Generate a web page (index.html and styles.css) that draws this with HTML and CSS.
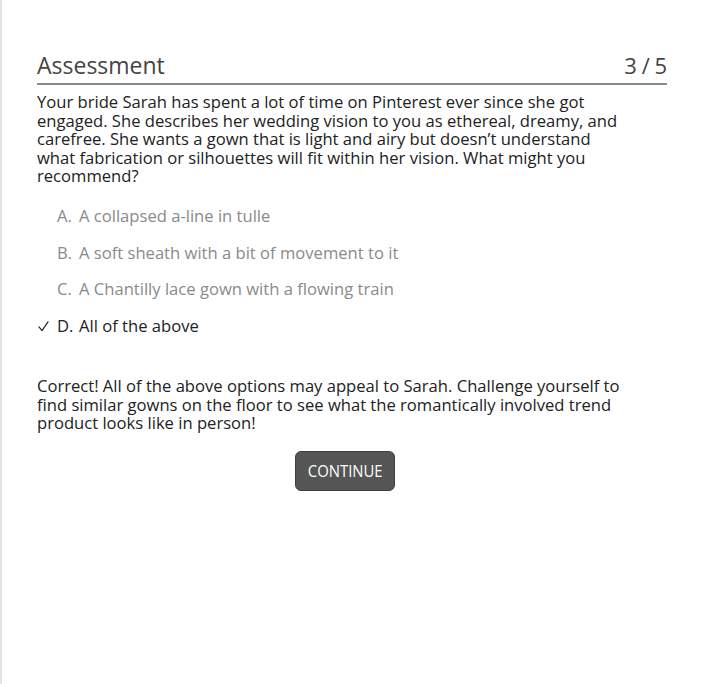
FILE: index.html
```html
<!DOCTYPE html>
<html>
<head>
<meta charset="utf-8">
<link rel="stylesheet" href="styles.css">
</head>
<body>
<div class="page">
  <div class="header">
    <h1 class="title">Assessment</h1>
    <div class="count">3 / 5</div>
  </div>
  <p class="question">Your bride Sarah has spent a lot of time on Pinterest ever since she got engaged. She describes her wedding vision to you as ethereal, dreamy, and carefree. She wants a gown that is light and airy but doesn’t understand what fabrication or silhouettes will fit within her vision. What might you recommend?</p>
  <ul class="options">
    <li class="option"><span class="mark"></span><span class="letter">A.</span><span>A collapsed a-line in tulle</span></li>
    <li class="option"><span class="mark"></span><span class="letter">B.</span><span>A soft sheath with a bit of movement to it</span></li>
    <li class="option"><span class="mark"></span><span class="letter">C.</span><span>A Chantilly lace gown with a flowing train</span></li>
    <li class="option selected"><span class="mark"><svg class="check" width="11" height="11" viewBox="0 0 11 11"><polyline points="1,5.8 4,9.6 10,0.8" fill="none" stroke="#222" stroke-width="1.2" stroke-linejoin="round" stroke-linecap="round"/></svg></span><span class="letter">D.</span><span>All of the above</span></li>
  </ul>
  <p class="feedback">Correct! All of the above options may appeal to Sarah. Challenge yourself to find similar gowns on the floor to see what the romantically involved trend product looks like in person!</p>
  <div class="actions"><button class="continue"><span class="continue-label">CONTINUE</span></button></div>
</div>
</body>
</html>
```
FILE: styles.css
```css
html, body { margin: 0; padding: 0; background: #fff; }
body {
  font-family: "Open Sans", "Liberation Sans", sans-serif;
  color: #222;
  border-left: 2px solid #e4e4e4;
  min-height: 684px;
  box-sizing: border-box;
}
.page { width: 630px; margin-left: 35px; padding-top: 49px; }
.header {
  display: flex;
  justify-content: space-between;
  align-items: flex-end;
  border-bottom: 2px solid #8a8a8a;
  padding-bottom: 2px;
}
.title { margin: 0; font-size: 23px; font-weight: 400; color: #444; line-height: 32px; }
.count { font-size: 22px; color: #444; line-height: 32px; word-spacing: -1px; }
.question { margin: 8px 0 0; width: 590px; font-size: 16.6px; line-height: 18.6px; color: #222; }
.options { list-style: none; margin: 19.5px 0 0; padding: 0; }
.option { display: flex; align-items: center; font-size: 16.6px; line-height: 22px; color: #8a8a8a; margin-bottom: 14.5px; }
.option.selected { color: #222; }
.mark { width: 20px; display: flex; align-items: center; }
.check { margin-left: 1px; margin-top: 1px; }
.letter { width: 22px; }
.feedback {
  margin: 40px 0 0;
  width: 600px;
  font-size: 16.6px;
  line-height: 18.6px;
  color: #222;
}
.actions { display: flex; justify-content: center; margin-top: 18px; padding-right: 14px; }
.continue {
  width: 100px; height: 40px;
  background: #555; color: #fff;
  border: 1px solid #3f3f3f; border-radius: 6px;
  font-family: "Open Sans", sans-serif; font-size: 16px;
  padding: 0;
}
.continue-label { display: inline-block; transform: scaleX(0.93); }
```
